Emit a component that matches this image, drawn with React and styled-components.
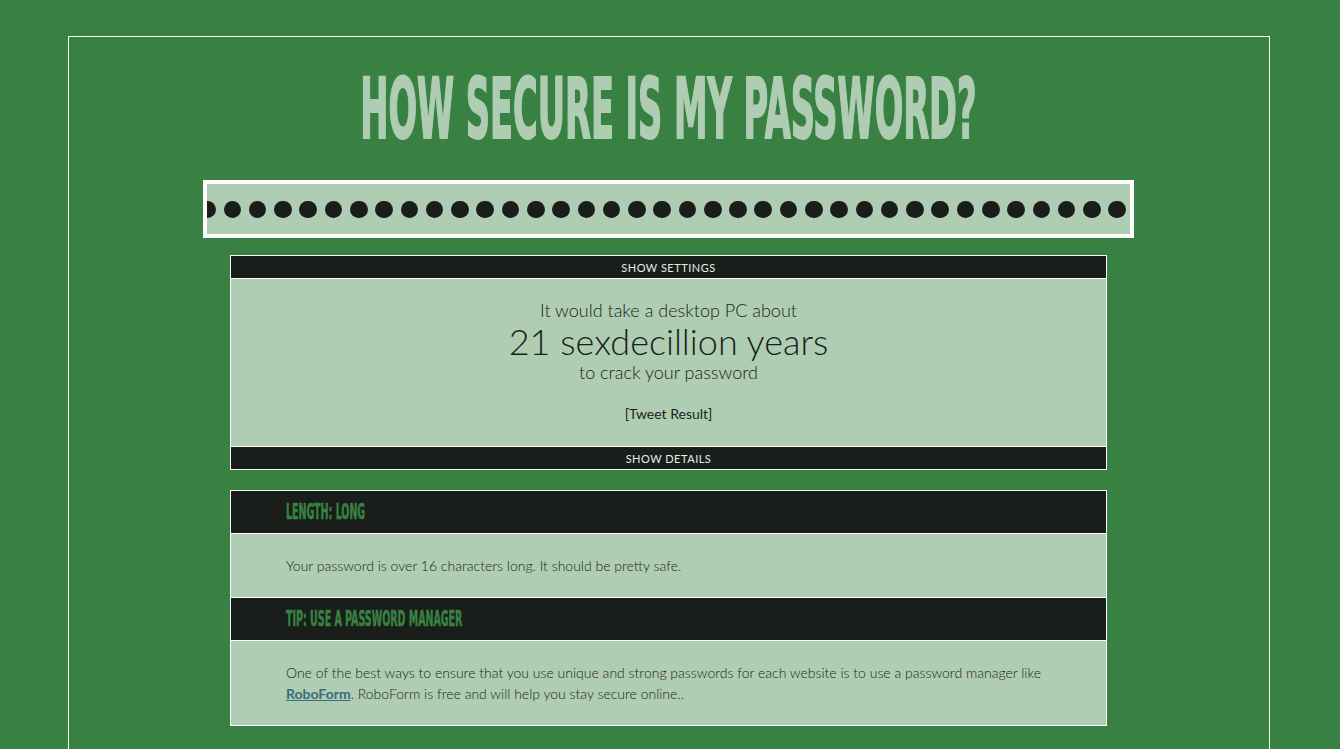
import React from 'react';
import styled, { createGlobalStyle } from 'styled-components';

const GlobalStyle = createGlobalStyle`
  html, body {
    margin: 0;
    padding: 0;
    background-color: #398142;
    font-family: Lato, "Open Sans", sans-serif;
  }
`;

const Page = styled.div`
  min-height: 749px;
  padding-top: 36px;
  box-sizing: border-box;
`;

const Frame = styled.div`
  width: 1202px;
  min-height: 720px;
  margin: 0 0 0 68px;
  padding-right: 1px;
  border: 1px solid #ffffff;
  border-bottom: none;
  box-sizing: border-box;
  display: flex;
  flex-direction: column;
  align-items: center;
`;

const Title = styled.h1`
  margin: 38px 0 0;
  height: 105px;
  display: flex;
  justify-content: center;
  align-items: flex-start;
  font-family: "DejaVu Sans Condensed", "Liberation Sans Narrow", sans-serif;
  font-weight: bold;
  font-size: 84px;
  line-height: 68px;
  color: #afcdb3;
  -webkit-text-stroke: 2px #afcdb3;
  white-space: nowrap;
`;

const Squeeze = styled.span`
  display: inline-block;
  transform: scaleX(${(p) => p.$scale});
  transform-origin: ${(p) => p.$origin || 'center'};
`;

const PasswordBox = styled.div`
  width: 931px;
  height: 58px;
  border: 4px solid #ffffff;
  box-sizing: border-box;
  background-color: #afcdb3;
  display: flex;
  align-items: center;
  justify-content: flex-end;
  gap: 7.7px;
  padding-right: 4px;
  padding-top: 1px;
  overflow: hidden;
`;

const Dot = styled.span`
  flex: 0 0 auto;
  width: 17.6px;
  height: 17.6px;
  border-radius: 50%;
  background-color: #1a1e1b;
`;

const Panel = styled.div`
  width: 877px;
  margin-top: ${(p) => p.$top}px;
  border: 1px solid #ffffff;
  box-sizing: border-box;
  background-color: #afcdb3;
  color: #1a1e1b;
`;

const Toggle = styled.div`
  height: 22px;
  background-color: #1a1e1b;
  color: #e8ece9;
  font-size: 11px;
  letter-spacing: 0.5px;
  text-transform: uppercase;
  display: flex;
  align-items: center;
  justify-content: center;
  border-bottom: ${(p) => (p.$bottom ? 'none' : '1px solid #ffffff')};
  border-top: ${(p) => (p.$bottom ? '1px solid #ffffff' : 'none')};
  cursor: pointer;
`;

const Result = styled.div`
  height: 167px;
  box-sizing: border-box;
  padding-top: 20px;
  text-align: center;
  font-weight: 300;
`;

const Line = styled.div`
  font-size: ${(p) => p.$size}px;
  line-height: ${(p) => p.$lh}px;
  margin-top: ${(p) => p.$top || 0}px;
  font-weight: ${(p) => p.$weight || 300};
`;

const SectionHead = styled.div`
  height: 40px;
  background-color: #1a1e1b;
  border-bottom: 1px solid #ffffff;
  border-top: ${(p) => (p.$first ? 'none' : '1px solid #ffffff')};
  padding-left: 55px;
  padding-bottom: 2px;
  display: flex;
  align-items: center;
`;

const HeadText = styled.h2`
  margin: 0;
  font-family: "DejaVu Sans Condensed", "Liberation Sans Narrow", sans-serif;
  font-weight: bold;
  font-size: 22px;
  color: #398142;
  -webkit-text-stroke: 0.6px #398142;
  white-space: nowrap;
`;

const SectionBody = styled.div`
  padding: ${(p) => p.$pad};
  font-size: 14px;
  line-height: 21px;
  font-weight: 300;
  color: #1a1e1b;
`;

const Link = styled.a`
  color: #3a6b80;
  font-weight: bold;
  text-decoration: underline;
`;

export default function App() {
  const dots = Array.from({ length: 38 });
  return (
    <>
      <GlobalStyle />
      <Page>
        <Frame>
          <Title>
            <Squeeze $scale={0.445}>HOW SECURE IS MY PASSWORD?</Squeeze>
          </Title>
          <PasswordBox>
            {dots.map((_, i) => (
              <Dot key={i} />
            ))}
          </PasswordBox>
          <Panel $top={17}>
            <Toggle>Show Settings</Toggle>
            <Result>
              <Line $size={18} $lh={22}>It would take a desktop PC about</Line>
              <Line $size={36} $lh={40}>21 sexdecillion years</Line>
              <Line $size={18} $lh={22}>to crack your password</Line>
              <Line $size={14} $lh={20} $top={21} $weight={400}>[Tweet Result]</Line>
            </Result>
            <Toggle $bottom>Show Details</Toggle>
          </Panel>
          <Panel $top={20}>
            <SectionHead $first>
              <HeadText>
                <Squeeze $scale={0.48} $origin="left">LENGTH: LONG</Squeeze>
              </HeadText>
            </SectionHead>
            <SectionBody $pad="21px 55px 21px">
              Your password is over 16 characters long. It should be pretty safe.
            </SectionBody>
            <SectionHead>
              <HeadText>
                <Squeeze $scale={0.48} $origin="left">TIP: USE A PASSWORD MANAGER</Squeeze>
              </HeadText>
            </SectionHead>
            <SectionBody $pad="21px 55px 21px">
              One of the best ways to ensure that you use unique and strong passwords for each website is to use a password manager like{' '}
              <Link href="#">RoboForm</Link>. RoboForm is free and will help you stay secure online..
            </SectionBody>
          </Panel>
        </Frame>
      </Page>
    </>
  );
}
